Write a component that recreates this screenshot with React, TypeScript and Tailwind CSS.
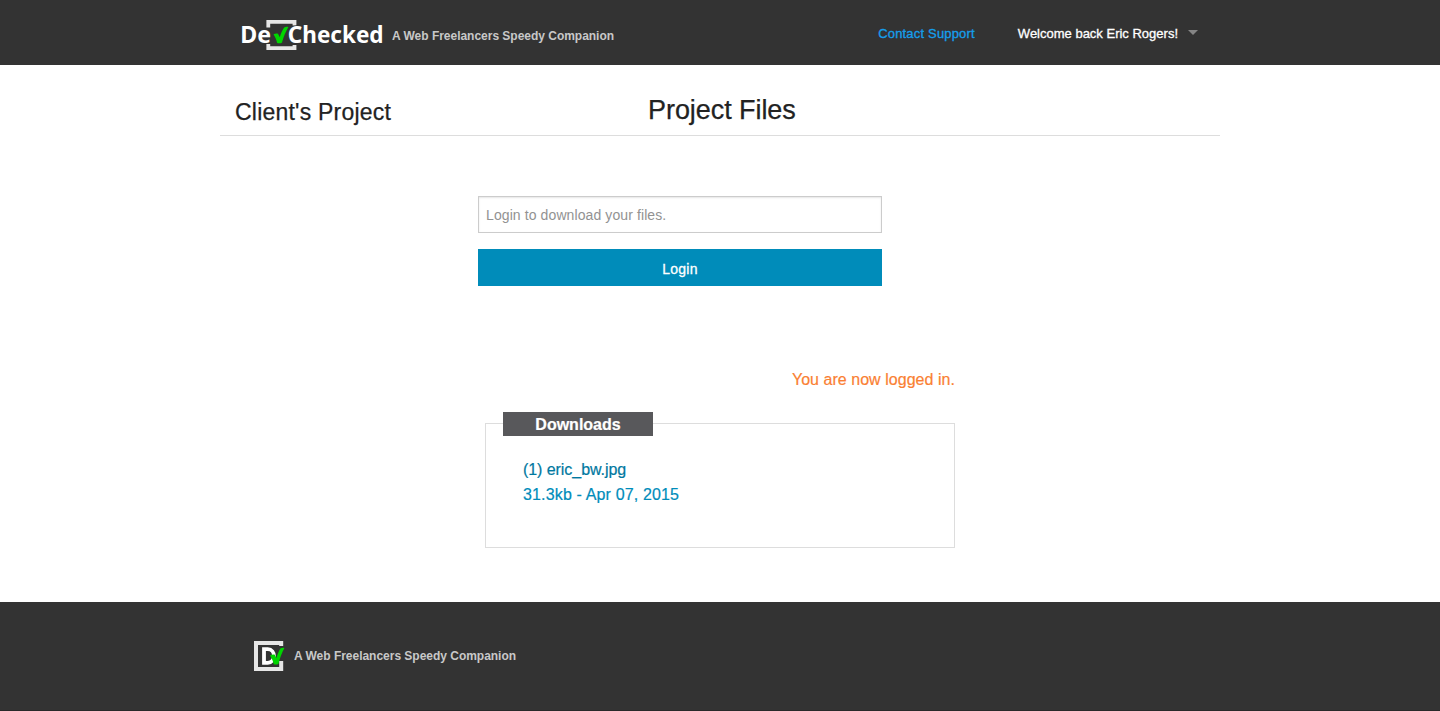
function Logo() {
  return (
    <svg className="block h-8 w-[148px] shrink-0" viewBox="240 19 148 32" aria-label="DevChecked">
      <path d="M268.3 27.5V21.9H294.5V25.5M268.3 44V48.1H294.5V45" fill="none" stroke="#e6e6e6" strokeWidth="3.8" />
      <g fill="#fff" fontFamily="'Noto Sans', sans-serif" fontWeight="700" fontSize="23">
        <text x="240.2" y="43" textLength="30.8" lengthAdjust="spacingAndGlyphs">De</text>
        <text x="287.8" y="43" textLength="95.8" lengthAdjust="spacingAndGlyphs" stroke="#333" strokeWidth="1" paintOrder="stroke">Checked</text>
      </g>
      <path d="M273.5 34.3C275 33.4 276.8 33.2 278 33.8L279.8 37.2C281 33.4 282.4 30.2 284.2 27.6C285.4 26.7 287 26.5 288.4 26.9C285.6 31.6 283.4 37 281.9 42.8C280.5 43.5 278.4 43.5 277.2 43C276.3 39.6 275.1 36.8 273.5 34.3Z" fill="#00d500" />
    </svg>
  );
}

function FooterMark() {
  return (
    <svg className="block h-[30px] w-[31px] shrink-0" viewBox="0 0 31 30" aria-hidden="true">
      <path d="M27.2 5V2H2V28H27.2V20" fill="none" stroke="#e6e6e6" strokeWidth="4" />
      <path d="M10 8.2H13.8C22 8.2 22 21.8 13.8 21.8H10Z" fill="none" stroke="#fff" strokeWidth="3.8" />
      <path d="M16 14.6C17.6 13.6 19.5 13.4 20.8 13.8L22.4 17C23.6 13.2 24.8 10 26.4 7.6C27.8 6.7 29.2 6.5 30.4 7C27.8 12 25.8 17 24.4 23C23 23.7 21 23.7 19.8 23.2C19 20 17.6 17 16 14.6Z" fill="#00d500" />
    </svg>
  );
}

function Tagline() {
  return (
    <span className="whitespace-nowrap text-[12px] leading-4 font-bold tracking-[-0.02px] text-[#c8c8c8]">
      A Web Freelancers Speedy Companion
    </span>
  );
}

export default function App() {
  return (
    <div className="flex h-[711px] flex-col overflow-hidden bg-white font-['Liberation_Sans',Arial,sans-serif] text-[#222]">
      <header className="h-[65px] shrink-0 bg-[#333]">
        <div className="mx-auto flex w-[1000px] items-start pl-5">
          <div className="flex pt-[19px]">
            <Logo />
            <div className="flex pt-[9px] pl-1"><Tagline /></div>
          </div>
          <nav className="mr-[22px] ml-auto flex items-start pt-[26px] text-[13px] leading-4 whitespace-nowrap">
            <a className="mr-[43px] tracking-[0.18px] text-[#159fec] [-webkit-text-stroke:0.3px_#159fec]">Contact Support</a>
            <a className="text-white [-webkit-text-stroke:0.3px_white]">Welcome back Eric Rogers!</a>
            <span className="mt-1 ml-[10px] border-x-5 border-t-5 border-x-transparent border-t-[#858585]" />
          </nav>
        </div>
      </header>

      <main className="mx-auto flex w-[1000px] grow flex-col">
        <div className="flex h-[71px] shrink-0 items-start border-b border-[#ddd] pl-[15px]">
          <h2 className="w-[413px] pt-[33px] text-[23px] leading-7 tracking-[0.22px] [-webkit-text-stroke:0.25px_#222]">Client's Project</h2>
          <h1 className="pt-[29px] text-[27px] leading-8 tracking-[-0.06px] [-webkit-text-stroke:0.25px_#222]">Project Files</h1>
        </div>

        <form className="mt-[60px] ml-[258px] flex w-[404px] flex-col gap-4" onSubmit={(e) => e.preventDefault()}>
          <input
            className="h-[37px] border border-[#ccc] px-[7px] text-[14px] tracking-[0.1px] shadow-[inset_0_1px_2px_rgba(0,0,0,0.1)] outline-none placeholder:text-[#929292] placeholder:opacity-100"
            placeholder="Login to download your files."
          />
          <button className="h-[37px] bg-[#008cba] pt-[3px] text-[14px] tracking-[0.2px] text-white [-webkit-text-stroke:0.3px_white]">Login</button>
        </form>

        <p className="mt-[82px] mr-[265px] text-right text-[16px] leading-6 tracking-[0.04px] text-[#fa7f33] [-webkit-text-stroke:0.2px_#fa7f33]">You are now logged in.</p>

        <section className="mt-[20px] ml-[265px] flex w-[470px] flex-col">
          <div className="flex h-[136px] flex-col bg-[linear-gradient(#ddd,#ddd)] bg-[length:100%_1px] bg-[position:0_11px] bg-no-repeat">
            <h3 className="ml-[18px] flex h-6 w-[150px] shrink-0 items-center justify-center bg-[#58585b] pt-px text-[16px] font-bold text-white [-webkit-text-stroke:0.2px_white]">Downloads</h3>
            <div className="-mt-3 grow border-x border-b border-[#ddd] pt-[33px] pl-[37px] text-[16px] leading-[25px]">
              <a className="block tracking-[-0.06px] text-[#0078a0] [-webkit-text-stroke:0.2px_#0078a0]">(1) eric_bw.jpg</a>
              <a className="block tracking-[0.15px] text-[#008cba] [-webkit-text-stroke:0.2px_#008cba]">31.3kb - Apr 07, 2015</a>
            </div>
          </div>
        </section>
      </main>

      <footer className="h-[109px] shrink-0 border-b border-[#292929] bg-[#333]">
        <div className="mx-auto flex w-[1000px] pt-[39px] pl-[34px]">
          <FooterMark />
          <div className="flex pt-[7px] pl-[9px]"><Tagline /></div>
        </div>
      </footer>
    </div>
  );
}
